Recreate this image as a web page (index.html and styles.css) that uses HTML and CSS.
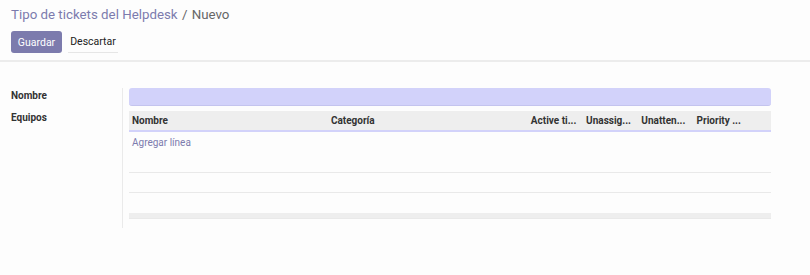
FILE: index.html
```html
<!DOCTYPE html>
<html lang="es">
<head>
   <meta charset="UTF-8">
   <title>Tipo de tickets del Helpdesk</title>
   <link rel="stylesheet" href="styles.css">
</head>
<body>
   <div class="control">
      <div class="crumbs">
         <a class="crumb">Tipo de tickets del Helpdesk</a>
         <span class="sep">/</span>
         <span class="current">Nuevo</span>
      </div>
      <div class="buttons">
         <button class="btn save">Guardar</button>
         <button class="btn discard">Descartar</button>
      </div>
   </div>
   <div class="sheet">
      <div class="labels">
         <div class="lbl">Nombre</div>
         <div class="lbl">Equipos</div>
      </div>
      <div class="fields">
         <div class="name-input"></div>
         <table class="list">
            <thead>
               <tr>
                  <th class="c-name">Nombre</th>
                  <th class="c-cat">Categoría</th>
                  <th class="c-sm">Active ti...</th>
                  <th class="c-sm">Unassig...</th>
                  <th class="c-sm">Unatten...</th>
                  <th class="c-last">Priority ...</th>
               </tr>
            </thead>
            <tbody>
               <tr class="add"><td colspan="6"><a>Agregar línea</a></td></tr>
               <tr class="empty"><td colspan="6"></td></tr>
               <tr class="empty"><td colspan="6"></td></tr>
               <tr class="empty last"><td colspan="6"></td></tr>
            </tbody>
            <tfoot>
               <tr><td colspan="6"></td></tr>
            </tfoot>
         </table>
      </div>
   </div>
</body>
</html>
```

FILE: styles.css
```css
body {
   margin: 0;
   background-color: #fdfdfd;
   font-family: Roboto, "Liberation Sans", sans-serif;
   font-size: 10px;
   color: #4c4c4c;
}
.control {
   padding: 5px 10px 7px 11px;
   border-bottom: 2px solid #ececec;
}
.crumbs {
   font-size: 13.3px;
   height: 20px;
   line-height: 20px;
}
.crumb {
   color: #7c7bad;
}
.sep {
   color: #666;
   margin: 0 1px;
}
.current {
   color: #666;
}
.buttons {
   display: flex;
   gap: 6px;
   margin-top: 6px;
}
.btn {
   font-family: Roboto, "Liberation Sans", sans-serif;
   font-size: 10.5px;
   height: 22px;
   padding: 0;
   border: none;
   border-radius: 3px;
   cursor: pointer;
}
.save {
   width: 51px;
   background-color: #7c7bad;
   color: white;
}
.discard {
   width: 50px;
   background-color: transparent;
   color: #222;
   border-radius: 0;
   border-bottom: 1px solid #e6e6e6;
}
.sheet {
   display: flex;
   padding: 26px 0 0 11px;
}
.labels {
   width: 111px;
   padding-top: 2px;
}
.lbl {
   font-weight: bold;
   color: #333;
   height: 22px;
   line-height: 12px;
}
.fields {
   width: 642px;
   border-left: 1px solid #eaeaea;
   padding: 0 0 9px 6px;
}
.name-input {
   height: 17px;
   background-color: #d2d2fa;
   border-radius: 3px;
   border-bottom: 1px solid #c4c4ee;
}
.list {
   width: 642px;
   margin-top: 5px;
   border-collapse: collapse;
   table-layout: fixed;
}
.list th {
   background-color: #eeeeee;
   height: 19px;
   padding: 0 3px;
   text-align: left;
   color: #333;
   border-bottom: 2px solid #d2d2fa;
   white-space: nowrap;
   overflow: hidden;
}
.c-name { width: 192px; }
.c-cat { width: 193px; }
.c-sm { width: 49px; }
.c-last { width: 71px; }
.list td {
   padding: 0 3px;
   border-bottom: 1px solid #e9e9e9;
}
.add td {
   height: 21px;
   border-bottom: none;
}
.add a {
   color: #7c7bad;
}
.empty td {
   height: 19px;
}
.empty.last td {
   height: 20px;
   border-bottom: none;
}
tfoot td {
   height: 5px;
   background-color: #eeeeee;
   border: none;
}
```
